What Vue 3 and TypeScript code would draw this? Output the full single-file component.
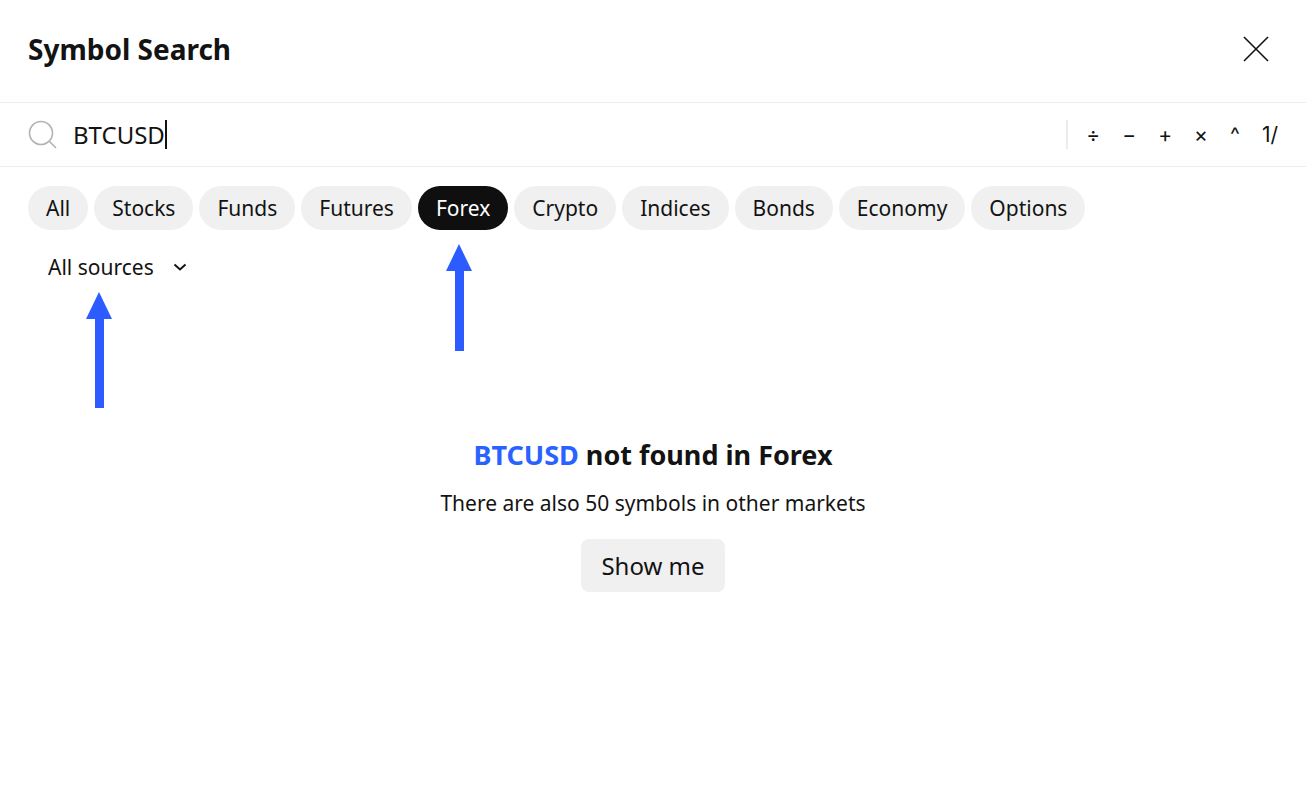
<template>
  <div class="dialog">
    <header class="head">
      <h1>Symbol Search</h1>
      <svg class="close" width="28" height="28" viewBox="0 0 28 28" aria-label="Close">
        <path d="M2 2l24 24M26 2L2 26" fill="none" stroke="#131313" stroke-width="1.6" />
      </svg>
    </header>

    <div class="search">
      <svg class="lens" width="30" height="30" viewBox="0 0 30 30">
        <circle cx="13" cy="13" r="11.5" fill="none" stroke="#b2b2b2" stroke-width="1.6" />
        <path d="M21.5 21.5l6.5 6.5" fill="none" stroke="#b2b2b2" stroke-width="1.6" />
      </svg>
      <span class="query">BTCUSD</span><span class="caret"></span>
      <div class="keys">
        <span v-for="k in keys" :key="k">{{ k }}</span>
      </div>
    </div>

    <div class="chips">
      <span v-for="c in chips" :key="c" class="chip" :class="{ active: c === 'Forex' }">{{ c }}</span>
    </div>

    <div class="source">
      <span>All sources</span>
      <svg width="18" height="18" viewBox="0 0 18 18">
        <path d="M3.5 6.5L9 11.5l5.5-5" fill="none" stroke="#131313" stroke-width="2" />
      </svg>
    </div>

    <div class="empty">
      <h2><span class="hit">BTCUSD</span> not found in Forex</h2>
      <p>There are also 50 symbols in other markets</p>
      <button type="button">Show me</button>
    </div>

    <i class="arrow arrow-source"></i>
    <i class="arrow arrow-forex"></i>
  </div>
</template>

<script setup lang="ts">
const keys: string[] = ['÷', '−', '+', '×', '^', '1/']
const chips: string[] = ['All', 'Stocks', 'Funds', 'Futures', 'Forex', 'Crypto', 'Indices', 'Bonds', 'Economy', 'Options']
</script>

<style>
html,
body {
  background: #fff;
}
</style>

<style scoped>
.dialog {
  position: relative;
  height: 789px;
  overflow: hidden;
  font-family: 'Noto Sans', sans-serif;
  color: #131313;
  background: #fff;
}

.head {
  display: flex;
  align-items: center;
  justify-content: space-between;
  height: 103px;
  padding: 0 36px 4px 28px;
  box-sizing: border-box;
  border-bottom: 1px solid #ececec;
}

.head h1 {
  margin: 0;
  font-size: 28px;
  font-weight: 700;
}

.search {
  display: flex;
  align-items: center;
  height: 64px;
  padding: 0 28px;
  box-sizing: border-box;
  border-bottom: 1px solid #ececec;
}

.lens {
  margin-right: 15px;
}

.query {
  font-size: 24px;
}

.caret {
  width: 2px;
  height: 29px;
  background: #131313;
}

.keys {
  display: flex;
  align-items: center;
  gap: 22px;
  height: 29px;
  margin-left: auto;
  padding-left: 18px;
  border-left: 2px solid #ececec;
  font-family: 'Inter', sans-serif;
  font-size: 21px;
}

.chips {
  display: flex;
  gap: 6px;
  padding: 19px 28px 0;
}

.chip {
  height: 44px;
  padding: 0 18px;
  border-radius: 22px;
  background: #f0f0f0;
  font-size: 21px;
  line-height: 44px;
}

.chip.active {
  background: #0f0f0f;
  color: #fff;
}

.source {
  display: flex;
  align-items: center;
  gap: 17px;
  height: 44px;
  margin-top: 15px;
  padding-left: 48px;
  font-size: 21px;
}

.empty {
  display: flex;
  flex-direction: column;
  align-items: center;
  margin-top: 147px;
}

.empty h2 {
  margin: 0;
  font-size: 27px;
  font-weight: 700;
}

.hit {
  color: #2962ff;
}

.empty p {
  margin: 16px 0 0;
  font-size: 21px;
}

.empty button {
  height: 53px;
  margin-top: 22px;
  padding: 0 20px;
  border: 0;
  border-radius: 8px;
  background: #f0f0f0;
  color: #131313;
  font: inherit;
  font-size: 24px;
}

.arrow {
  position: absolute;
  width: 9px;
  background: #2c5cff;
}

.arrow::before {
  content: '';
  position: absolute;
  top: -27px;
  left: -9px;
  border-style: solid;
  border-width: 0 13.5px 27px;
  border-color: transparent transparent #2c5cff;
}

.arrow-source {
  left: 95px;
  top: 319px;
  height: 89px;
}

.arrow-forex {
  left: 455px;
  top: 271px;
  height: 80px;
}
</style>
